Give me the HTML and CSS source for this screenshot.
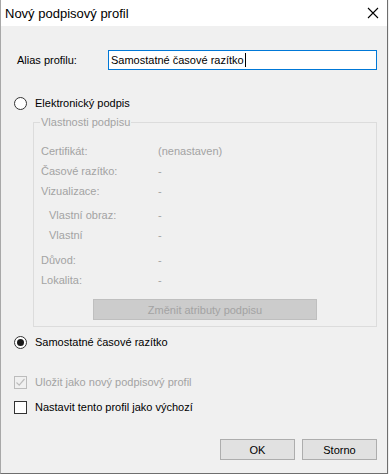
FILE: index.html
```html
<!DOCTYPE html>
<html lang="cs">
<head>
    <meta charset="UTF-8">
    <title>Nový podpisový profil</title>
    <link rel="stylesheet" href="styles.css">
</head>
<body>
    <div class="dialog">
        <div class="titlebar">
            <span class="title">Nový podpisový profil</span>
            <svg class="close" width="12" height="12" viewBox="0 0 12 12">
                <path d="M1 1 L11 11 M11 1 L1 11" stroke="#000" stroke-width="1.1" fill="none"/>
            </svg>
        </div>

        <div class="content">
            <div class="alias-row">
                <span class="alias-label">Alias profilu:</span>
                <div class="textbox">Samostatné časové razítko<span class="caret"></span></div>
            </div>

            <div class="option option-first">
                <span class="radio"></span>
                <span>Elektronický podpis</span>
            </div>

            <fieldset class="group">
                <legend>Vlastnosti podpisu</legend>
                <div class="props">
                    <div class="prop"><span class="prop-name">Certifikát:</span><span>(nenastaven)</span></div>
                    <div class="prop"><span class="prop-name">Časové razítko:</span><span>-</span></div>
                    <div class="prop"><span class="prop-name">Vizualizace:</span><span>-</span></div>
                    <div class="prop prop-sub prop-gap"><span class="prop-name">Vlastní obraz:</span><span>-</span></div>
                    <div class="prop prop-sub"><span class="prop-name">Vlastní</span><span>-</span></div>
                    <div class="prop prop-gap2"><span class="prop-name">Důvod:</span><span>-</span></div>
                    <div class="prop"><span class="prop-name">Lokalita:</span><span>-</span></div>
                </div>
                <div class="attr-row">
                    <button class="attr-button" disabled>Změnit atributy podpisu</button>
                </div>
            </fieldset>

            <div class="option option-second">
                <span class="radio radio-checked"></span>
                <span>Samostatné časové razítko</span>
            </div>

            <div class="check check-first disabled">
                <span class="box box-disabled">
                    <svg width="11" height="11" viewBox="0 0 11 11">
                        <path d="M1.5 5.5 L4.2 8.2 L9.5 2" stroke="#bdbdbd" stroke-width="1.2" fill="none"/>
                    </svg>
                </span>
                <span>Uložit jako nový podpisový profil</span>
            </div>

            <div class="check check-second">
                <span class="box"></span>
                <span>Nastavit tento profil jako výchozí</span>
            </div>

            <div class="actions">
                <button class="button">OK</button>
                <button class="button">Storno</button>
            </div>
        </div>
    </div>
</body>
</html>
```

FILE: styles.css
```css
body {
    margin: 0;
    background-color: #f0f0f0;
    font-family: "Liberation Sans", Arial, sans-serif;
    font-size: 11px;
    color: #000;
}

.dialog {
    width: 388px;
    height: 474px;
    box-sizing: border-box;
    border: 1px solid #6e6e6e;
    border-left-color: #a8a8a8;
    border-top: none;
    background-color: #f0f0f0;
}

.titlebar {
    height: 26px;
    background-color: #fff;
    display: flex;
    align-items: center;
    justify-content: space-between;
    padding: 0 8px 0 4px;
}

.title {
    font-size: 13px;
}

.content {
    padding: 24px 10px 0 12px;
}

.alias-row {
    display: flex;
    align-items: center;
    height: 20px;
}

.alias-label {
    width: 92px;
    padding-left: 4px;
    line-height: 20px;
}

.textbox {
    width: 272px;
    height: 20px;
    box-sizing: border-box;
    border: 1px solid #0078d7;
    background-color: #fff;
    padding-left: 2px;
    line-height: 18px;
    display: flex;
    align-items: center;
}

.caret {
    display: inline-block;
    width: 1px;
    height: 14px;
    background-color: #000;
    margin-left: 1px;
}

.option,
.check {
    display: flex;
    align-items: center;
    height: 16px;
    line-height: 16px;
}

.option-first {
    margin-top: 25px;
}

.option-second {
    margin-top: 7px;
}

.radio {
    width: 13px;
    height: 13px;
    box-sizing: border-box;
    border: 1px solid #333;
    border-radius: 50%;
    background-color: #fff;
    margin: 0 8px 0 1px;
    display: flex;
    align-items: center;
    justify-content: center;
}

.radio-checked::after {
    content: "";
    width: 7px;
    height: 7px;
    border-radius: 50%;
    background-color: #1a1a1a;
}

.group {
    margin: 4px 0 0 20px;
    width: 344px;
    box-sizing: border-box;
    border: 1px solid #dcdcdc;
    padding: 0 7px 6px 7px;
    color: #a3a3a3;
}

.group legend {
    padding: 0 1px;
    margin-left: -1px;
    line-height: 14px;
}

.props {
    padding-top: 14px;
}

.prop {
    display: grid;
    grid-template-columns: 117px 1fr;
    line-height: 16px;
    margin-top: 4px;
}

.prop:first-child {
    margin-top: 0;
}

.prop-sub {
    padding-left: 8px;
    grid-template-columns: 109px 1fr;
}

.prop-gap {
    margin-top: 8px;
}

.prop-gap2 {
    margin-top: 9px;
}

.attr-row {
    display: flex;
    justify-content: center;
    margin-top: 11px;
}

.attr-button {
    width: 224px;
    height: 21px;
    border: 1px solid #bfbfbf;
    background-color: #cccccc;
    color: #a3a3a3;
    font-family: "Liberation Sans", Arial, sans-serif;
    font-size: 11px;
    padding: 0;
}

.check-first {
    margin-top: 24px;
}

.check-second {
    margin-top: 9px;
}

.box {
    width: 13px;
    height: 13px;
    box-sizing: border-box;
    border: 1px solid #333;
    background-color: #fff;
    margin: 0 8px 0 1px;
    display: flex;
    align-items: center;
    justify-content: center;
}

.box-disabled {
    border-color: #bcbcbc;
    background-color: #f0f0f0;
}

.disabled {
    color: #a3a3a3;
}

.actions {
    display: flex;
    justify-content: flex-end;
    gap: 7px;
    margin-top: 24px;
}

.button {
    width: 75px;
    height: 21px;
    border: 1px solid #adadad;
    background-color: #e1e1e1;
    font-family: "Liberation Sans", Arial, sans-serif;
    font-size: 11px;
    color: #000;
    padding: 0;
}
```
